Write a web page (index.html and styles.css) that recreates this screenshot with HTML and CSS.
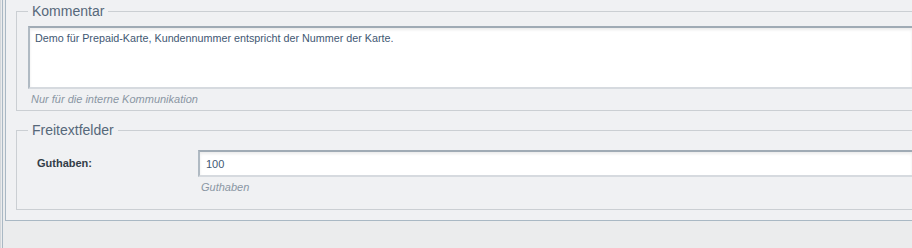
FILE: index.html
```html
<!DOCTYPE html>
<html lang="de">
<head>
    <meta charset="UTF-8">
    <meta name="viewport" content="width=device-width, initial-scale=1.0">
    <title>Kunde bearbeiten</title>
    <link rel="stylesheet" href="styles.css">
</head>
<body>
    <div class="page">
        <div class="side">
            <div class="panel">
                <fieldset class="group">
                    <legend>Kommentar</legend>
                    <textarea class="comment" name="comment">Demo für Prepaid-Karte, Kundennummer entspricht der Nummer der Karte.</textarea>
                    <p class="hint">Nur für die interne Kommunikation</p>
                </fieldset>

                <fieldset class="group group-fields">
                    <legend>Freitextfelder</legend>
                    <div class="row">
                        <label for="guthaben">Guthaben:</label>
                        <div class="field">
                            <input type="text" id="guthaben" name="guthaben" value="100">
                            <p class="hint">Guthaben</p>
                        </div>
                    </div>
                </fieldset>
            </div>
        </div>
    </div>
</body>
</html>
```

FILE: styles.css
```css
*{
    margin: 0;
    padding: 0;
    box-sizing: border-box;
}
body{
    background-color: #ebeced;
    font-family: "Liberation Sans", Arial, sans-serif;
    font-size: 11px;
    height: 248px;
}
.page{
    border-left: 1px solid #d3d7db;
    padding-left: 1px;
    height: 100%;
}
.side{
    border-left: 1px solid #a9b8c4;
    padding-left: 2px;
    height: 100%;
}
.panel{
    background-color: #f0f1f3;
    border-left: 1px solid #a9b8c4;
    border-bottom: 1px solid #a9b8c4;
    padding: 0 0 10px 10px;
}
.group{
    border: 1px solid #cbcfd3;
    border-right: 0;
    padding: 0 0 4px 11px;
}
.group legend{
    font-size: 14px;
    line-height: 22px;
    color: #56687a;
    padding: 0 4px;
}
.group-fields{
    margin-top: 8px;
    padding-bottom: 15px;
}
.comment, .field input{
    display: block;
    width: 100%;
    font-family: inherit;
    font-size: 11px;
    color: #3f5873;
    background-color: #fff;
    border: 2px solid;
    border-right: 0;
    border-color: #a0abb5 #d3d8dc #d6dadf #b0bac3;
    box-shadow: inset 0 2px 3px rgba(0, 0, 0, 0.08);
    outline: none;
}
.comment{
    margin-top: 4px;
    height: 63px;
    padding: 4px 5px;
    font-size: 10.75px;
    line-height: 13px;
    resize: none;
}
.hint{
    font-style: italic;
    color: #8a96a3;
    line-height: 14px;
    margin: 3px 0 0 3px;
}
.row{
    display: flex;
    align-items: flex-start;
    margin-top: 9px;
}
.row label{
    width: 170px;
    padding-left: 9px;
    line-height: 27px;
    font-weight: bold;
    color: #333d47;
}
.field{
    flex: 1;
}
.field input{
    height: 27px;
    padding: 0 6px;
}
```
